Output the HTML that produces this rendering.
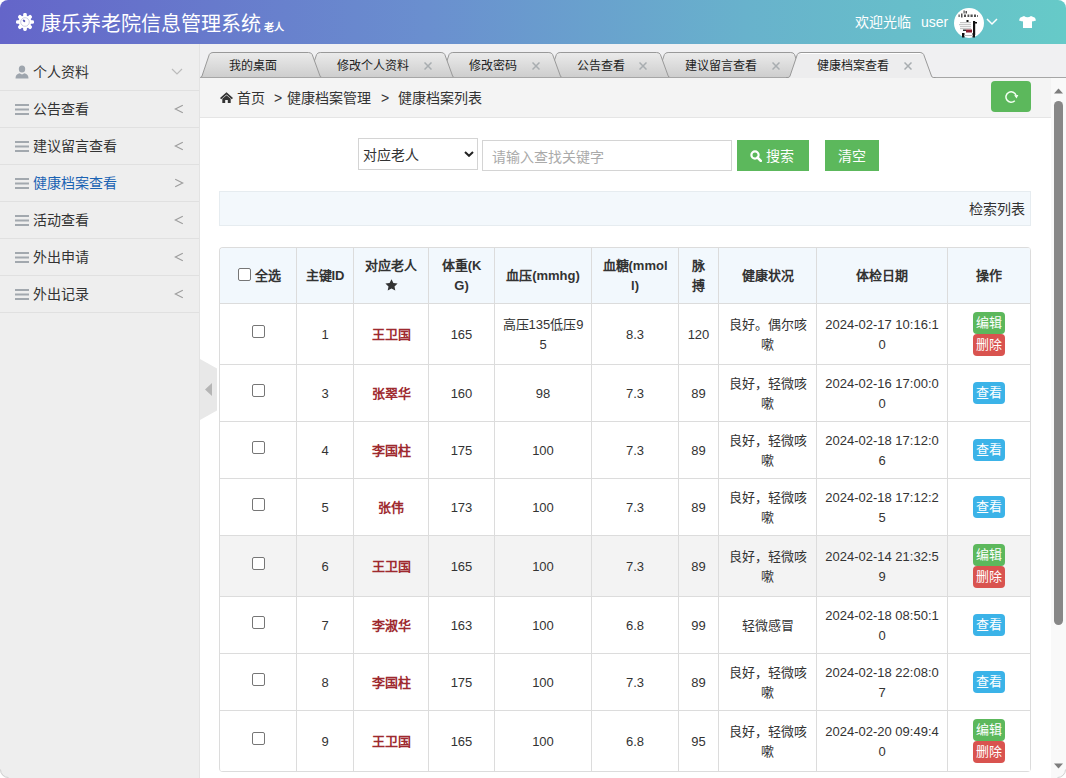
<!DOCTYPE html>
<html lang="zh-CN"><head><meta charset="utf-8">
<style>
*{box-sizing:border-box}
html,body{margin:0;padding:0;width:1066px;height:778px;overflow:hidden;background:#fff;font-family:"Liberation Sans",sans-serif;color:#333}
.abs{position:absolute}
#hdr{position:absolute;left:0;top:0;width:1066px;height:44px;background:linear-gradient(90deg,#6465c9 0%,#6a8fcf 40%,#68b2cc 70%,#66cac8 100%)}
#title{position:absolute;left:41px;top:11px;font-size:20px;color:#fff;line-height:26px;white-space:nowrap}
#title small{font-size:10px;font-weight:bold;margin-left:3px}
.wel{position:absolute;top:13px;font-size:14px;color:#fff;line-height:18px;white-space:nowrap}
#side{position:absolute;left:0;top:44px;width:200px;height:734px;background:#eeeeee;border-right:1px solid #e3e3e3}
.item{position:absolute;left:0;width:199px;height:37px;border-bottom:1px solid #e0e0e0}
.item .t{position:absolute;left:33px;top:9px;font-size:14px;line-height:18px;color:#333;white-space:nowrap}
.item .ic{position:absolute;left:15px;top:13px}
.item .ar{position:absolute;left:172px;top:12px}
#tabbar{position:absolute;left:200px;top:44px;width:866px;height:34px;background:#f0f0f2;border-bottom:1px solid #a4a4a4}
.tabt{position:absolute;top:58px;font-size:12px;line-height:16px;color:#222;white-space:nowrap}
.tabx{position:absolute;top:62px}
#crumb{position:absolute;left:200px;top:78px;width:851px;height:40px;background:#f4f4f4;border-bottom:1px solid #e5e5e5}
#crumb span{position:absolute;top:11px;font-size:14px;line-height:18px;color:#333;white-space:nowrap}
#scroll{position:absolute;left:1051px;top:78px;width:15px;height:700px;background:#f9f9f9}
.btn{position:absolute;background:#5cb85c;color:#fff;font-size:14px;line-height:33px;text-align:center;white-space:nowrap}
#sel{position:absolute;left:358px;top:138px;width:120px;height:32px;border:1px solid #d4d4d4;background:#fff}
#inp{position:absolute;left:482px;top:140px;width:250px;height:31px;border:1px solid #d4d4d4;background:#fff}
#bar{position:absolute;left:219px;top:191px;width:812px;height:35px;background:#f3f8fc;border:1px solid #e6ecf0}
#tblwrap{position:absolute;left:219px;top:247px;width:812px;border:1px solid #dcdcdc;border-bottom:none;border-right:none;border-radius:4px 4px 4px 4px;overflow:hidden}
table{border-collapse:separate;border-spacing:0;table-layout:fixed;width:811px}
td,th{border-right:1px solid #dcdcdc;border-bottom:1px solid #dcdcdc;padding:0;text-align:center;vertical-align:middle;font-size:13px;line-height:20px;color:#333;white-space:nowrap}
th{background:#f2f8fd;font-weight:bold;height:56px}
td{padding-top:2px}
td.op{padding-top:0}
td .nm{color:#9e2a2f;font-weight:bold}
.cb{display:inline-block;width:13px;height:13px;border:1px solid #767676;border-radius:2px;background:#fff;vertical-align:middle;position:relative;top:-4px}
.b{display:inline-block;width:32px;height:22px;line-height:22px;border-radius:4px;color:#fff;font-size:13px;text-align:center}
.g{background:#5cb85c}.r{background:#d9534f}.i{background:#3bb3e8}
</style></head><body>
<div id="app" style="position:absolute;left:0;top:0;width:1066px;height:778px;border-radius:8px;overflow:hidden;background:#fff">

<div id="hdr">
  <svg class="abs" style="left:16px;top:13px" width="18" height="18" viewBox="0 0 18 18"><g fill="#fff"><circle cx="9" cy="9" r="6.4"/><g id="tt"><rect x="7.2" y="0" width="3.6" height="4.2" rx="1.4"/></g><use href="#tt" transform="rotate(45 9 9)"/><use href="#tt" transform="rotate(90 9 9)"/><use href="#tt" transform="rotate(135 9 9)"/><use href="#tt" transform="rotate(180 9 9)"/><use href="#tt" transform="rotate(225 9 9)"/><use href="#tt" transform="rotate(270 9 9)"/><use href="#tt" transform="rotate(315 9 9)"/></g><circle cx="9" cy="9" r="4.3" fill="none" stroke="#b8b8d8" stroke-width="0.7"/><ellipse cx="8" cy="7.8" rx="1.5" ry="1" transform="rotate(45 8 7.8)" fill="#5a5ab8"/></svg>
  <div id="title">康乐养老院信息管理系统<small>老人</small></div>
  <div class="wel" style="left:855px">欢迎光临</div>
  <div class="wel" style="left:921px">user</div>
  <svg class="abs" style="left:954px;top:8px" width="30" height="30" viewBox="0 0 30 30"><circle cx="15" cy="15" r="15" fill="#fff"/>
<g fill="#333" opacity="0.85"><rect x="9.5" y="2.5" width="1.2" height="3"/><rect x="11.5" y="3" width="1.5" height="2.5"/><rect x="4.5" y="6.5" width="1.2" height="2.5"/><rect x="7" y="5.5" width="1.5" height="4"/><rect x="10" y="6.5" width="2" height="2.5"/><rect x="13.5" y="6.5" width="1.8" height="2.5"/><rect x="16.5" y="6.5" width="2.2" height="2.5"/><rect x="20" y="6.5" width="2" height="2.5"/><rect x="23" y="7" width="0.8" height="2"/></g>
<g fill="#c8c8c8"><rect x="6" y="14" width="11" height="1.2"/><rect x="5" y="16" width="12" height="1.2"/><rect x="6" y="18" width="11" height="1.2"/><rect x="6" y="20" width="11" height="1.2"/></g>
<rect x="12.5" y="12" width="2" height="2" fill="#111"/><rect x="19" y="13" width="2.2" height="14" fill="#111"/><rect x="20" y="14" width="3" height="1.5" fill="#111"/>
<rect x="12" y="21.5" width="6" height="3" fill="#8a2030"/><rect x="9" y="21.5" width="3" height="1.5" fill="#333"/>
<rect x="8" y="25" width="2.5" height="4.5" fill="#111"/><rect x="18.5" y="25" width="2.5" height="4.5" fill="#111"/><rect x="10" y="27" width="9" height="1" fill="#bbb"/></svg>
  <svg class="abs" style="left:986px;top:17px" width="12" height="9" viewBox="0 0 12 9"><path d="M1 2 L6 7 L11 2" fill="none" stroke="#fff" stroke-width="1.5"/></svg>
  <svg class="abs" style="left:1019px;top:16px" width="17" height="12" viewBox="0 0 17 12"><path d="M5 0 L1 1.8 L0 4.5 L3.5 5.5 L4 5 L4 12 L13 12 L13 5 L13.5 5.5 L17 4.5 L16 1.8 L12 0 Q8.5 2.5 5 0Z" fill="#fff"/></svg>
</div>

<div id="side">
<div class="item" style="top:10px"><svg class="ic" style="top:11px" width="14" height="14" viewBox="0 0 14 14"><ellipse cx="7" cy="4" rx="3.2" ry="3.6" fill="#9ea5ad"/><path d="M0.5 13.5 Q0.5 9.2 4.5 8.3 L7 9.5 L9.5 8.3 Q13.5 9.2 13.5 13.5Z" fill="#9ea5ad"/></svg><div class="t">个人资料</div><svg class="ar" style="left:171px;top:14px" width="12" height="8" viewBox="0 0 12 8"><path d="M1 1 L6 6 L11 1" fill="none" stroke="#bbb" stroke-width="1.2"/></svg></div>
<div class="item" style="top:47px"><svg class="ic" style="top:13px" width="14" height="11" viewBox="0 0 14 11"><rect x="0" y="0" width="14" height="2" fill="#a2a8ae"/><rect x="0" y="4.5" width="14" height="2" fill="#a2a8ae"/><rect x="0" y="9" width="14" height="2" fill="#a2a8ae"/></svg><div class="t">公告查看</div><svg class="ar" style="left:174px;top:13px" width="10" height="10" viewBox="0 0 10 10"><path d="M8.8 1.3 L1.3 5 L8.8 8.7" fill="none" stroke="#9c9c9c" stroke-width="1.1"/></svg></div>
<div class="item" style="top:84px"><svg class="ic" style="top:13px" width="14" height="11" viewBox="0 0 14 11"><rect x="0" y="0" width="14" height="2" fill="#a2a8ae"/><rect x="0" y="4.5" width="14" height="2" fill="#a2a8ae"/><rect x="0" y="9" width="14" height="2" fill="#a2a8ae"/></svg><div class="t">建议留言查看</div><svg class="ar" style="left:174px;top:13px" width="10" height="10" viewBox="0 0 10 10"><path d="M8.8 1.3 L1.3 5 L8.8 8.7" fill="none" stroke="#9c9c9c" stroke-width="1.1"/></svg></div>
<div class="item" style="top:121px"><svg class="ic" style="top:13px" width="14" height="11" viewBox="0 0 14 11"><rect x="0" y="0" width="14" height="2" fill="#a2a8ae"/><rect x="0" y="4.5" width="14" height="2" fill="#a2a8ae"/><rect x="0" y="9" width="14" height="2" fill="#a2a8ae"/></svg><div class="t" style="color:#1b63b3">健康档案查看</div><svg class="ar" style="left:174px;top:13px" width="10" height="10" viewBox="0 0 10 10"><path d="M1.2 1.3 L8.7 5 L1.2 8.7" fill="none" stroke="#9c9c9c" stroke-width="1.1"/></svg></div>
<div class="item" style="top:158px"><svg class="ic" style="top:13px" width="14" height="11" viewBox="0 0 14 11"><rect x="0" y="0" width="14" height="2" fill="#a2a8ae"/><rect x="0" y="4.5" width="14" height="2" fill="#a2a8ae"/><rect x="0" y="9" width="14" height="2" fill="#a2a8ae"/></svg><div class="t">活动查看</div><svg class="ar" style="left:174px;top:13px" width="10" height="10" viewBox="0 0 10 10"><path d="M8.8 1.3 L1.3 5 L8.8 8.7" fill="none" stroke="#9c9c9c" stroke-width="1.1"/></svg></div>
<div class="item" style="top:195px"><svg class="ic" style="top:13px" width="14" height="11" viewBox="0 0 14 11"><rect x="0" y="0" width="14" height="2" fill="#a2a8ae"/><rect x="0" y="4.5" width="14" height="2" fill="#a2a8ae"/><rect x="0" y="9" width="14" height="2" fill="#a2a8ae"/></svg><div class="t">外出申请</div><svg class="ar" style="left:174px;top:13px" width="10" height="10" viewBox="0 0 10 10"><path d="M8.8 1.3 L1.3 5 L8.8 8.7" fill="none" stroke="#9c9c9c" stroke-width="1.1"/></svg></div>
<div class="item" style="top:232px"><svg class="ic" style="top:13px" width="14" height="11" viewBox="0 0 14 11"><rect x="0" y="0" width="14" height="2" fill="#a2a8ae"/><rect x="0" y="4.5" width="14" height="2" fill="#a2a8ae"/><rect x="0" y="9" width="14" height="2" fill="#a2a8ae"/></svg><div class="t">外出记录</div><svg class="ar" style="left:174px;top:13px" width="10" height="10" viewBox="0 0 10 10"><path d="M8.8 1.3 L1.3 5 L8.8 8.7" fill="none" stroke="#9c9c9c" stroke-width="1.1"/></svg></div>
</div>

<div id="tabbar"></div>
<svg class="abs" style="left:0;top:0" width="1066" height="80" viewBox="0 0 1066 80"><defs><linearGradient id="tg" x1="0" y1="0" x2="0" y2="1"><stop offset="0" stop-color="#ebebeb"/><stop offset="1" stop-color="#cdcdcd"/></linearGradient></defs><path d="M653.1,77.5 L655.1,77.5 Q656.6,77.5 657.1,76.0 L664.4,54.5 Q665.4,52.5 668.1,52.5 L790.8,52.5 Q793.5,52.5 794.5,54.5 L802.3,76.0 Q802.8,77.5 804.3,77.5 L806.3,77.5" fill="url(#tg)" stroke="#999" stroke-width="1"/><path d="M545.1,77.5 L547.1,77.5 Q548.6,77.5 549.1,76.0 L556.4,54.5 Q557.4,52.5 560.1,52.5 L656.7,52.5 Q659.4000000000001,52.5 660.4000000000001,54.5 L668.2,76.0 Q668.7,77.5 670.2,77.5 L672.2,77.5" fill="url(#tg)" stroke="#999" stroke-width="1"/><path d="M437.8,77.5 L439.8,77.5 Q441.3,77.5 441.8,76.0 L449.1,54.5 Q450.1,52.5 452.8,52.5 L548.9,52.5 Q551.6,52.5 552.6,54.5 L560.4,76.0 Q560.9,77.5 562.4,77.5 L564.4,77.5" fill="url(#tg)" stroke="#999" stroke-width="1"/><path d="M305.3,77.5 L307.3,77.5 Q308.8,77.5 309.3,76.0 L316.6,54.5 Q317.6,52.5 320.3,52.5 L441.1,52.5 Q443.8,52.5 444.8,54.5 L452.6,76.0 Q453.1,77.5 454.6,77.5 L456.6,77.5" fill="url(#tg)" stroke="#999" stroke-width="1"/><path d="M200.0,77.5 Q201.5,77.5 202.0,76.0 L209.3,54.5 Q210.3,52.5 213.0,52.5 L308.5,52.5 Q311.2,52.5 312.2,54.5 L320,76.0 Q320.5,77.5 322,77.5 L324,77.5" fill="url(#tg)" stroke="#999" stroke-width="1"/><rect x="200" y="77" width="866" height="1" fill="#a6a6a6"/><rect x="788" y="77" width="145.5" height="1" fill="#ededee"/><path d="M786.0,77.5 L788.0,77.5 Q789.5,77.5 790.0,76.0 L797.3,54.5 Q798.3,52.5 801.0,52.5 L920.0,52.5 Q922.7,52.5 923.7,54.5 L931.5,76.0 Q932.0,77.5 933.5,77.5 L935.5,77.5" fill="#ededee" stroke="#999" stroke-width="1"/><path d="M800.5,53.5 L920.5,53.5" stroke="#fff" stroke-width="1"/></svg>
<div class="tabt" style="left:228.5px">我的桌面</div><div class="tabt" style="left:337.0px">修改个人资料</div><svg class="tabx" style="left:424px" width="8" height="8" viewBox="0 0 8 8"><path d="M0.5 0.5 L7.5 7.5 M7.5 0.5 L0.5 7.5" stroke="#a8adb0" stroke-width="1.5"/></svg><div class="tabt" style="left:468.8px">修改密码</div><svg class="tabx" style="left:532.3px" width="8" height="8" viewBox="0 0 8 8"><path d="M0.5 0.5 L7.5 7.5 M7.5 0.5 L0.5 7.5" stroke="#a8adb0" stroke-width="1.5"/></svg><div class="tabt" style="left:576.5px">公告查看</div><svg class="tabx" style="left:639px" width="8" height="8" viewBox="0 0 8 8"><path d="M0.5 0.5 L7.5 7.5 M7.5 0.5 L0.5 7.5" stroke="#a8adb0" stroke-width="1.5"/></svg><div class="tabt" style="left:684.9px">建议留言查看</div><svg class="tabx" style="left:771.7px" width="8" height="8" viewBox="0 0 8 8"><path d="M0.5 0.5 L7.5 7.5 M7.5 0.5 L0.5 7.5" stroke="#a8adb0" stroke-width="1.5"/></svg><div class="tabt" style="left:817.3px">健康档案查看</div><svg class="tabx" style="left:904px" width="8" height="8" viewBox="0 0 8 8"><path d="M0.5 0.5 L7.5 7.5 M7.5 0.5 L0.5 7.5" stroke="#a8adb0" stroke-width="1.5"/></svg>
<div id="crumb">
<svg class="abs" style="left:20px;top:14px" width="13" height="11" viewBox="0 0 13 11"><path d="M6.5 0.3 L0 6 L1.2 7.2 L6.5 2.6 L11.8 7.2 L13 6Z" fill="#333"/><path d="M2.3 6.8 L6.5 3.3 L10.7 6.8 L10.7 11 L7.8 11 L7.8 8 L5.2 8 L5.2 11 L2.3 11Z" fill="#333"/></svg>
<span style="left:37px">首页</span>
<span style="left:74px">&gt;</span>
<span style="left:87px">健康档案管理</span>
<span style="left:181px">&gt;</span>
<span style="left:198px">健康档案列表</span>
<div class="abs" style="left:791px;top:3px;width:40px;height:31px;background:#5cb85c;border-radius:4px"></div>
<svg class="abs" style="left:805px;top:12px" width="16" height="16" viewBox="0 0 16 16"><path d="M9.8 10.7 A5.2 5.2 0 1 1 11.1 5.4" fill="none" stroke="#f2fff2" stroke-width="1.5"/><path d="M9.1 5.2 L13.3 5.0 L11.6 8.4Z" fill="#f2fff2"/></svg>
</div>
<div id="scroll">
<svg class="abs" style="left:3px;top:10px" width="9" height="6" viewBox="0 0 9 6"><path d="M0 5.5 L4.5 0.5 L9 5.5Z" fill="#7d7d7d"/></svg>
<div class="abs" style="left:3px;top:23px;width:9px;height:524px;background:#878787;border-radius:4.5px"></div>
<svg class="abs" style="left:3px;top:685px" width="9" height="6" viewBox="0 0 9 6"><path d="M0 0.5 L4.5 5.5 L9 0.5Z" fill="#7d7d7d"/></svg>
</div>


<div id="sel"><span class="abs" style="left:4px;top:7px;font-size:14px;line-height:18px;color:#333">对应老人</span>
<svg class="abs" style="left:105px;top:12px" width="10" height="6" viewBox="0 0 10 6"><path d="M1 1 L5 4.8 L9 1" fill="none" stroke="#222" stroke-width="2"/></svg></div>
<div id="inp"><span class="abs" style="left:9px;top:7px;font-size:14px;line-height:18px;color:#aaa">请输入查找关键字</span></div>
<div class="btn" style="left:737px;top:140px;width:72px;height:31px"><svg style="position:absolute;left:13px;top:10px" width="12" height="12" viewBox="0 0 12 12"><circle cx="5" cy="5" r="3.6" fill="none" stroke="#fff" stroke-width="2.2"/><path d="M7.5 7.5 L10.8 10.8" stroke="#fff" stroke-width="2.6" stroke-linecap="round"/></svg><span style="position:absolute;left:29px;top:0">搜索</span></div>
<div class="btn" style="left:825px;top:140px;width:54px;height:31px">清空</div>
<div id="bar"><span class="abs" style="right:5px;top:8px;font-size:14px;line-height:18px;color:#333">检索列表</span></div>
<div id="tblwrap"><table><colgroup><col style="width:77px"><col style="width:57px"><col style="width:75px"><col style="width:66px"><col style="width:97px"><col style="width:87px"><col style="width:40px"><col style="width:98px"><col style="width:131px"><col style="width:83px"></colgroup>
<tr><th style="padding-left:3px"><span class="cb" style="margin-right:4px;top:-2px"></span>全选</th><th>主键ID</th><th>对应老人<br><svg style="vertical-align:top;margin-top:3px" width="13" height="12" viewBox="0 0 13 12"><path d="M6.5 0.2 L8.4 4 L12.6 4.5 L9.5 7.4 L10.3 11.6 L6.5 9.6 L2.7 11.6 L3.5 7.4 L0.4 4.5 L4.6 4Z" fill="#333"/></svg></th><th>体重(K<br>G)</th><th>血压(mmhg)</th><th>血糖(mmol<br>l)</th><th>脉<br>搏</th><th>健康状况</th><th>体检日期</th><th>操作</th></tr>
<tr style="height:61px"><td><span class="cb"></span></td><td>1</td><td><span class="nm">王卫国</span></td><td>165</td><td>高压135低压9<br>5</td><td>8.3</td><td>120</td><td>良好。偶尔咳<br>嗽</td><td>2024-02-17 10:16:1<br>0</td><td class="op"><span class="b g">编辑</span><br><span class="b r">删除</span></td></tr>
<tr style="height:57px"><td><span class="cb"></span></td><td>3</td><td><span class="nm">张翠华</span></td><td>160</td><td>98</td><td>7.3</td><td>89</td><td>良好，轻微咳<br>嗽</td><td>2024-02-16 17:00:0<br>0</td><td class="op"><span class="b i">查看</span></td></tr>
<tr style="height:57px"><td><span class="cb"></span></td><td>4</td><td><span class="nm">李国柱</span></td><td>175</td><td>100</td><td>7.3</td><td>89</td><td>良好，轻微咳<br>嗽</td><td>2024-02-18 17:12:0<br>6</td><td class="op"><span class="b i">查看</span></td></tr>
<tr style="height:57px"><td><span class="cb"></span></td><td>5</td><td><span class="nm">张伟</span></td><td>173</td><td>100</td><td>7.3</td><td>89</td><td>良好，轻微咳<br>嗽</td><td>2024-02-18 17:12:2<br>5</td><td class="op"><span class="b i">查看</span></td></tr>
<tr style="height:61px;background:#f3f3f3"><td><span class="cb"></span></td><td>6</td><td><span class="nm">王卫国</span></td><td>165</td><td>100</td><td>7.3</td><td>89</td><td>良好，轻微咳<br>嗽</td><td>2024-02-14 21:32:5<br>9</td><td class="op"><span class="b g">编辑</span><br><span class="b r">删除</span></td></tr>
<tr style="height:57px"><td><span class="cb"></span></td><td>7</td><td><span class="nm">李淑华</span></td><td>163</td><td>100</td><td>6.8</td><td>99</td><td>轻微感冒</td><td>2024-02-18 08:50:1<br>0</td><td class="op"><span class="b i">查看</span></td></tr>
<tr style="height:57px"><td><span class="cb"></span></td><td>8</td><td><span class="nm">李国柱</span></td><td>175</td><td>100</td><td>7.3</td><td>89</td><td>良好，轻微咳<br>嗽</td><td>2024-02-18 22:08:0<br>7</td><td class="op"><span class="b i">查看</span></td></tr>
<tr style="height:61px"><td><span class="cb"></span></td><td>9</td><td><span class="nm">王卫国</span></td><td>165</td><td>100</td><td>6.8</td><td>95</td><td>良好，轻微咳<br>嗽</td><td>2024-02-20 09:49:4<br>0</td><td class="op"><span class="b g">编辑</span><br><span class="b r">删除</span></td></tr>
</table></div>
<svg class="abs" style="left:200px;top:359px" width="18" height="62" viewBox="0 0 18 62"><path d="M0 0 L17 9.5 L17 51.5 L0 61Z" fill="#e8e8e8"/><path d="M5 30.5 L12 24 L12 37Z" fill="#b5b5b5"/></svg>
</div>
<svg class="abs" style="left:0;top:768px" width="10" height="10" viewBox="0 0 10 10"><path d="M0.5 1.5 A8 8 0 0 0 8.5 9.5" fill="none" stroke="#d2d2d2" stroke-width="1"/></svg>
<svg class="abs" style="left:1056px;top:768px" width="10" height="10" viewBox="0 0 10 10"><path d="M9.5 1.5 A8 8 0 0 1 1.5 9.5" fill="none" stroke="#d2d2d2" stroke-width="1"/></svg>
</body></html>
